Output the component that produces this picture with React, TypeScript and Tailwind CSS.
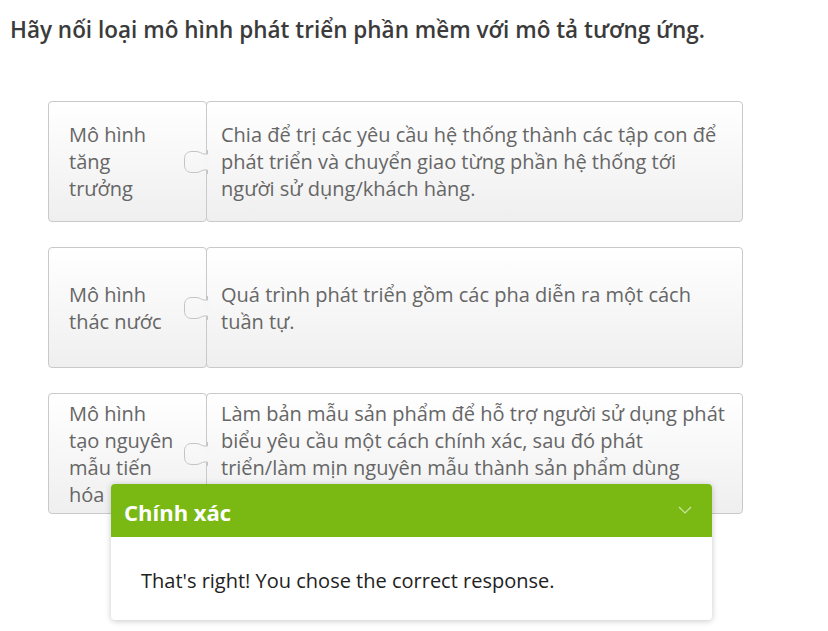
import React from 'react';

const rows = [
  {
    term: 'Mô hình tăng trưởng',
    desc: 'Chia để trị các yêu cầu hệ thống thành các tập con để phát triển và chuyển giao từng phần hệ thống tới người sử dụng/khách hàng.',
  },
  {
    term: 'Mô hình thác nước',
    desc: 'Quá trình phát triển gồm các pha diễn ra một cách tuần tự.',
  },
  {
    term: 'Mô hình tạo nguyên mẫu tiến hóa',
    desc: 'Làm bản mẫu sản phẩm để hỗ trợ người sử dụng phát biểu yêu cầu một cách chính xác, sau đó phát triển/làm mịn nguyên mẫu thành sản phẩm dùng thực tế.',
  },
];

// puzzle knob sitting on the seam between the two pieces
const Knob = () => (
  <svg
    className="absolute left-[-25px] top-1/2 -translate-y-1/2"
    width="28"
    height="24"
    viewBox="0 0 28 24"
  >
    <rect x="22" y="4" width="6" height="16" fill="#f6f6f6" />
    <path
      d="M25.5 0 V4 H22 C20 4 18 1.5 14 1.5 H10 C5 1.5 2.5 4.5 2.5 9 V15 C2.5 19.5 5 22.5 10 22.5 H14 C18 22.5 20 20 22 20 H25.5 V24"
      fill="none"
      stroke="#c4c4c4"
      strokeWidth="1"
    />
  </svg>
);

export default function App() {
  return (
    <div className="relative w-[828px] h-[631px] bg-white overflow-hidden font-['Open_Sans',sans-serif]">
      <h1 className="pl-[10px] pt-[15px] text-[22.5px] leading-[30px] font-semibold text-[#3b3b3b]">
        Hãy nối loại mô hình phát triển phần mềm với mô tả tương ứng.
      </h1>

      <div className="ml-[48px] mt-[56px] w-[695px] flex flex-col gap-[25px]">
        {rows.map((r, i) => (
          <div key={i} className="flex h-[121px]">
            <div className="w-[159px] shrink-0 flex items-center rounded-[4px] border border-[#c9c9c9] bg-gradient-to-b from-white to-[#efefef] pl-[20px] pr-[30px] text-[20px] leading-[27px] text-[#666]">
              {r.term}
            </div>
            <div className="relative -ml-px flex-1 flex items-center rounded-[4px] border border-[#c9c9c9] bg-gradient-to-b from-white to-[#efefef] pl-[14px] pr-[16px] text-[20px] leading-[27px] text-[#666]">
              <Knob />
              {r.desc}
            </div>
          </div>
        ))}
      </div>

      <div className="absolute left-[111px] top-[484px] w-[601px] rounded-[4px] bg-white shadow-[0_1px_6px_rgba(0,0,0,0.22)] overflow-hidden">
        <div className="h-[53px] bg-[#7ab913] flex items-center justify-between pl-[13px] pr-[20px] pt-[3px]">
          <span className="text-[22px] font-bold text-white">Chính xác</span>
          <svg width="14" height="9" viewBox="0 0 14 9" className="-mt-[3px]">
            <path d="M1 1 L7 7 L13 1" fill="none" stroke="#cde6a5" strokeWidth="1.2" />
          </svg>
        </div>
        <div className="h-[83px] flex items-center pl-[30px] pt-[4px] text-[20px] text-[#222]">
          That's right! You chose the correct response.
        </div>
      </div>
    </div>
  );
}
